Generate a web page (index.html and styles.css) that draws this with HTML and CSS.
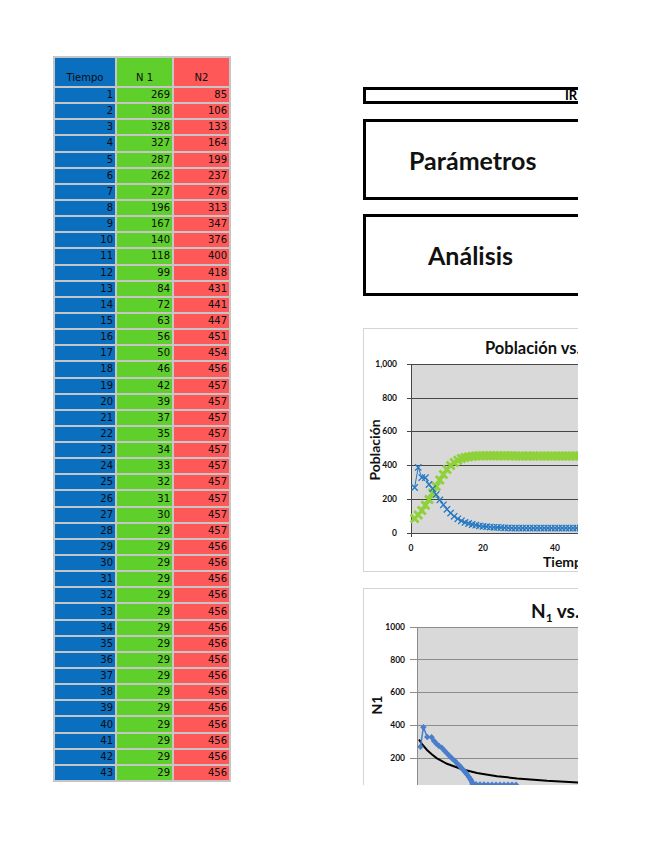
FILE: index.html
```html
<!DOCTYPE html>
<html lang="es">
<head>
<meta charset="utf-8">
<title>Competencia</title>
<link rel="stylesheet" href="styles.css">
</head>
<body>
<div class="page">
  <div class="sheet">
    <div class="c h t">Tiempo</div><div class="c h n1">N 1</div><div class="c h n2">N2</div>
    <div class="c t">1</div><div class="c n1">269</div><div class="c n2">85</div>
    <div class="c t">2</div><div class="c n1">388</div><div class="c n2">106</div>
    <div class="c t">3</div><div class="c n1">328</div><div class="c n2">133</div>
    <div class="c t">4</div><div class="c n1">327</div><div class="c n2">164</div>
    <div class="c t">5</div><div class="c n1">287</div><div class="c n2">199</div>
    <div class="c t">6</div><div class="c n1">262</div><div class="c n2">237</div>
    <div class="c t">7</div><div class="c n1">227</div><div class="c n2">276</div>
    <div class="c t">8</div><div class="c n1">196</div><div class="c n2">313</div>
    <div class="c t">9</div><div class="c n1">167</div><div class="c n2">347</div>
    <div class="c t">10</div><div class="c n1">140</div><div class="c n2">376</div>
    <div class="c t">11</div><div class="c n1">118</div><div class="c n2">400</div>
    <div class="c t">12</div><div class="c n1">99</div><div class="c n2">418</div>
    <div class="c t">13</div><div class="c n1">84</div><div class="c n2">431</div>
    <div class="c t">14</div><div class="c n1">72</div><div class="c n2">441</div>
    <div class="c t">15</div><div class="c n1">63</div><div class="c n2">447</div>
    <div class="c t">16</div><div class="c n1">56</div><div class="c n2">451</div>
    <div class="c t">17</div><div class="c n1">50</div><div class="c n2">454</div>
    <div class="c t">18</div><div class="c n1">46</div><div class="c n2">456</div>
    <div class="c t">19</div><div class="c n1">42</div><div class="c n2">457</div>
    <div class="c t">20</div><div class="c n1">39</div><div class="c n2">457</div>
    <div class="c t">21</div><div class="c n1">37</div><div class="c n2">457</div>
    <div class="c t">22</div><div class="c n1">35</div><div class="c n2">457</div>
    <div class="c t">23</div><div class="c n1">34</div><div class="c n2">457</div>
    <div class="c t">24</div><div class="c n1">33</div><div class="c n2">457</div>
    <div class="c t">25</div><div class="c n1">32</div><div class="c n2">457</div>
    <div class="c t">26</div><div class="c n1">31</div><div class="c n2">457</div>
    <div class="c t">27</div><div class="c n1">30</div><div class="c n2">457</div>
    <div class="c t">28</div><div class="c n1">29</div><div class="c n2">457</div>
    <div class="c t">29</div><div class="c n1">29</div><div class="c n2">456</div>
    <div class="c t">30</div><div class="c n1">29</div><div class="c n2">456</div>
    <div class="c t">31</div><div class="c n1">29</div><div class="c n2">456</div>
    <div class="c t">32</div><div class="c n1">29</div><div class="c n2">456</div>
    <div class="c t">33</div><div class="c n1">29</div><div class="c n2">456</div>
    <div class="c t">34</div><div class="c n1">29</div><div class="c n2">456</div>
    <div class="c t">35</div><div class="c n1">29</div><div class="c n2">456</div>
    <div class="c t">36</div><div class="c n1">29</div><div class="c n2">456</div>
    <div class="c t">37</div><div class="c n1">29</div><div class="c n2">456</div>
    <div class="c t">38</div><div class="c n1">29</div><div class="c n2">456</div>
    <div class="c t">39</div><div class="c n1">29</div><div class="c n2">456</div>
    <div class="c t">40</div><div class="c n1">29</div><div class="c n2">456</div>
    <div class="c t">41</div><div class="c n1">29</div><div class="c n2">456</div>
    <div class="c t">42</div><div class="c n1">29</div><div class="c n2">456</div>
    <div class="c t">43</div><div class="c n1">29</div><div class="c n2">456</div>
  </div>

  <div class="panel">
    <div class="banner">IR</div>
    <div class="box params">Parámetros</div>
    <div class="box analysis">Análisis</div>

    <div class="chart chart1">
      <svg class="plot" width="320" height="242" viewBox="0 0 320 242">
        <defs>
          <marker id="bx" markerWidth="10" markerHeight="10" refX="5" refY="5" markerUnits="userSpaceOnUse">
            <path d="M1.8 1.8 L8.2 8.2 M8.2 1.8 L1.8 8.2" stroke="#2477c4" stroke-width="1.3" fill="none"/>
          </marker>
          <marker id="gx" markerWidth="12" markerHeight="12" refX="6" refY="6" markerUnits="userSpaceOnUse">
            <path d="M2 2 L10 10 M10 2 L2 10" stroke="#8fd13a" stroke-width="2.8" fill="none"/>
          </marker>
        </defs>
        <text class="ttl" x="121" y="25">Población vs. Tiempo</text>
        <rect x="47" y="35" width="273" height="169" fill="#d9d9d9"/>
        <g class="grid1">
          <line x1="43" y1="35.5" x2="320" y2="35.5"/>
          <line x1="43" y1="69.5" x2="320" y2="69.5"/>
          <line x1="43" y1="102.5" x2="320" y2="102.5"/>
          <line x1="43" y1="136.5" x2="320" y2="136.5"/>
          <line x1="43" y1="170.5" x2="320" y2="170.5"/>
          <line x1="43" y1="204.5" x2="320" y2="204.5"/>
          <line x1="47.5" y1="35" x2="47.5" y2="208"/>
        </g>
        <g class="lbl">
          <text x="33" y="38">1,000</text>
          <text x="33" y="72">800</text>
          <text x="33" y="105">600</text>
          <text x="33" y="139">400</text>
          <text x="33" y="173">200</text>
          <text x="33" y="207">0</text>
        </g>
        <g class="lbl mid">
          <text x="47" y="222">0</text>
          <text x="119" y="222">20</text>
          <text x="191" y="222">40</text>
        </g>
        <text class="axt" x="179" y="238">Tiempo</text>
        <text class="axt mid" transform="translate(11,121) rotate(-90)" y="5">Población</text>
        <polyline class="s-green" marker-start="url(#gx)" marker-mid="url(#gx)" marker-end="url(#gx)" points="50.6,189.6 54.2,186.1 57.8,181.5 61.4,176.3 65,170.4 68.6,164 72.2,157.4 75.8,151.1 79.4,145.4 83,140.5 86.6,136.4 90.2,133.4 93.8,131.2 97.4,129.5 101,128.5 104.6,127.8 108.2,127.3 111.8,126.9 115.4,126.8 119,126.8 122.6,126.8 126.2,126.8 129.8,126.8 133.4,126.8 137,126.8 140.6,126.8 144.2,126.8 147.8,126.8 151.4,126.9 155,126.9 158.6,126.9 162.2,126.9 165.8,126.9 169.4,126.9 173,126.9 176.6,126.9 180.2,126.9 183.8,126.9 187.4,126.9 191,126.9 194.6,126.9 198.2,126.9 201.8,126.9 205.4,126.9 209,126.9 212.6,126.9 216.2,126.9"/>
        <polyline class="s-blue" marker-start="url(#bx)" marker-mid="url(#bx)" marker-end="url(#bx)" points="50.6,158.5 54.2,138.4 57.8,148.6 61.4,148.7 65,155.5 68.6,159.7 72.2,165.6 75.8,170.9 79.4,175.8 83,180.3 86.6,184.1 90.2,187.3 93.8,189.8 97.4,191.8 101,193.4 104.6,194.5 108.2,195.5 111.8,196.2 115.4,196.9 119,197.4 122.6,197.7 126.2,198.1 129.8,198.3 133.4,198.4 137,198.6 140.6,198.8 144.2,198.9 147.8,199.1 151.4,199.1 155,199.1 158.6,199.1 162.2,199.1 165.8,199.1 169.4,199.1 173,199.1 176.6,199.1 180.2,199.1 183.8,199.1 187.4,199.1 191,199.1 194.6,199.1 198.2,199.1 201.8,199.1 205.4,199.1 209,199.1 212.6,199.1 216.2,199.1"/>
      </svg>
    </div>

    <div class="chart chart2">
      <svg class="plot" width="320" height="260" viewBox="0 0 320 260">
        <defs>
          <marker id="bd" markerWidth="8" markerHeight="8" refX="4" refY="4" markerUnits="userSpaceOnUse">
            <path d="M4 0.8 L7.2 4 L4 7.2 L0.8 4 Z" fill="#4a7dcc"/>
          </marker>
        </defs>
        <text class="ttl2" x="167" y="29">N<tspan class="sub" dy="4">1</tspan><tspan dy="-4"> vs. N</tspan><tspan class="sub" dy="4">2</tspan></text>
        <rect x="53" y="38" width="267" height="222" fill="#d9d9d9"/>
        <g class="grid2">
          <line x1="46" y1="38.5" x2="320" y2="38.5"/>
          <line x1="46" y1="70.5" x2="320" y2="70.5"/>
          <line x1="46" y1="103.5" x2="320" y2="103.5"/>
          <line x1="46" y1="136.5" x2="320" y2="136.5"/>
          <line x1="46" y1="169.5" x2="320" y2="169.5"/>
          <line x1="46" y1="201.5" x2="320" y2="201.5"/>
          <line x1="53.5" y1="38" x2="53.5" y2="260"/>
        </g>
        <g class="lbl">
          <text x="41" y="41">1000</text>
          <text x="41" y="74">800</text>
          <text x="41" y="106">600</text>
          <text x="41" y="139">400</text>
          <text x="41" y="172">200</text>
        </g>
        <text class="axt mid" transform="translate(14,116) rotate(-90)" y="4">N1</text>
        <polyline class="s-black" points="55,150.5 58,155.05 63,161 68,165.6 73,169.3 83,174.8 98,180.25 113,183.9 133,187.15 153,189.4 183,191.75 214,193.4 253,194.8 320,196.5"/>
        <polyline class="s-blue2" marker-start="url(#bd)" marker-mid="url(#bd)" marker-end="url(#bd)" points="56.5,157.7 59.4,138.2 63.2,148 67.6,148.2 70,152 72.5,154.8 75,157 77.8,158.8 80.5,161.8 83.2,164.6 85.8,167.2 88.4,169.7 91,172 93.2,174.4 95.5,176.6 97.2,178.8 99,180.6 100.6,182.4 102,184 103.1,185.5 104.9,188 106.3,190 107.2,191.4 108.2,193.6 108.6,194.9 112,195.2 116,195.4 120,195.5 124,195.6 128,195.7 132,195.7 136,195.8 140,195.8 144,195.8 148,195.8 152,195.8"/>
      </svg>
    </div>
  </div>
</div>
</body>
</html>
```
FILE: styles.css
```css
html, body {
  margin: 0;
  background: #ffffff;
}

.page {
  display: flex;
  align-items: flex-start;
  gap: 132px;
  padding: 56px 0 0 53px;
}

/* spreadsheet table */
.sheet {
  display: grid;
  grid-template-columns: 60px 55px 55px;
  grid-template-rows: 28px repeat(43, 1fr);
  gap: 2px;
  padding: 2px;
  height: 726px;
  box-sizing: border-box;
  background: #c6c6c6;
  font-family: "DejaVu Sans", Verdana, sans-serif;
  font-size: 10px;
  color: #0c0c0c;
}

.c {
  display: flex;
  align-items: center;
  justify-content: flex-end;
  padding-right: 2px;
  line-height: 1;
}

.h {
  align-items: flex-end;
  justify-content: center;
  padding: 0 0 3px 0;
}

.t { background: #0b6fc0; }
.n1 { background: #5ecf2b; }
.n2 { background: #ff5858; }

/* right panel (clipped print area) */
.panel {
  margin-top: 31px;
  width: 215px;
  height: 698px;
  overflow: hidden;
  display: flex;
  flex-direction: column;
}

.panel > * {
  flex-shrink: 0;
  width: 320px;
  box-sizing: border-box;
}

.banner {
  height: 17px;
  border: 3px solid #000;
  padding-left: 199px;
  font-family: Lato, "Open Sans", sans-serif;
  font-weight: 700;
  font-size: 13px;
  line-height: 11px;
}

.box {
  border: 3px solid #000;
  display: flex;
  align-items: center;
  font-family: Lato, "Open Sans", sans-serif;
  font-weight: 700;
  font-size: 25px;
  color: #111;
}

.params {
  margin-top: 15px;
  height: 81px;
  padding-left: 43px;
}

.analysis {
  margin-top: 14px;
  height: 82px;
  padding-left: 62px;
}

.chart {
  border: 1px solid #d4d4d4;
  background: #fff;
}

.chart1 {
  margin-top: 32px;
  height: 244px;
}

.chart2 {
  margin-top: 16px;
  height: 262px;
}

.plot {
  display: block;
}

.plot text {
  font-family: Lato, "Open Sans", sans-serif;
  font-weight: 700;
  fill: #111;
}

.plot .ttl { font-size: 16.5px; }
.plot .ttl2 { font-size: 19px; }
.plot .sub { font-size: 12px; }

.plot .lbl text {
  font-size: 8.5px;
  text-anchor: end;
}

.plot .lbl.mid text,
.plot .mid {
  text-anchor: middle;
}

.plot .axt { font-size: 14px; }

.grid1 line {
  stroke: #474747;
  stroke-width: 1;
}

.grid2 line {
  stroke: #8c8c8c;
  stroke-width: 1;
}

.s-green {
  fill: none;
  stroke: #8fd13a;
  stroke-width: 1.5;
}

.s-blue {
  fill: none;
  stroke: #2477c4;
  stroke-width: 1;
}

.s-blue2 {
  fill: none;
  stroke: #4a7dcc;
  stroke-width: 1.5;
}

.s-black {
  fill: none;
  stroke: #000;
  stroke-width: 2;
}
```
